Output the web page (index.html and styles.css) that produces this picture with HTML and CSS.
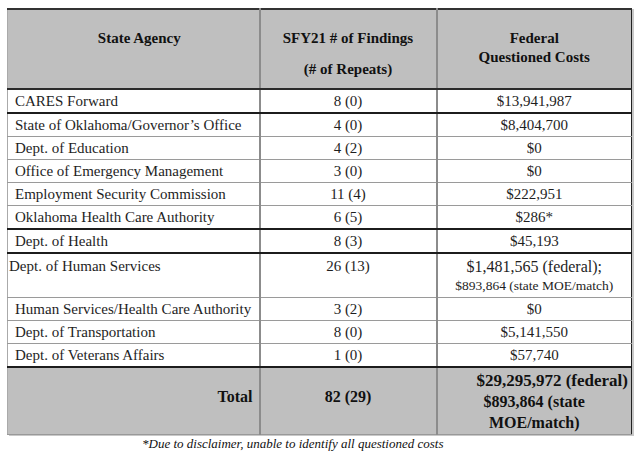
FILE: index.html
```html
<!DOCTYPE html>
<html lang="en">
<head>
<meta charset="utf-8">
<title>SFY21 Findings</title>
<link rel="stylesheet" href="styles.css">
</head>
<body>
<div class="page">
  <table class="grid">
    <colgroup>
      <col class="c1"><col class="c2"><col class="c3">
    </colgroup>
    <thead>
      <tr class="head">
        <th class="h1">State Agency</th>
        <th class="h2"><p>SFY21 # of Findings</p><p class="gap">(# of Repeats)</p></th>
        <th class="h3">Federal<br>Questioned Costs</th>
      </tr>
    </thead>
    <tbody>
      <tr class="dark"><td class="name">CARES Forward</td><td>8 (0)</td><td>$13,941,987</td></tr>
      <tr><td class="name">State of Oklahoma/Governor’s Office</td><td>4 (0)</td><td>$8,404,700</td></tr>
      <tr><td class="name">Dept. of Education</td><td>4 (2)</td><td>$0</td></tr>
      <tr><td class="name">Office of Emergency Management</td><td>3 (0)</td><td>$0</td></tr>
      <tr><td class="name">Employment Security Commission</td><td>11 (4)</td><td>$222,951</td></tr>
      <tr class="dark"><td class="name">Oklahoma Health Care Authority</td><td>6 (5)</td><td>$286*</td></tr>
      <tr class="dark"><td class="name">Dept. of Health</td><td>8 (3)</td><td>$45,193</td></tr>
      <tr class="tall"><td class="name tight">Dept. of Human Services</td><td>26 (13)</td><td><div class="big">$1,481,565 (federal);</div><div class="small">$893,864 (state MOE/match)</div></td></tr>
      <tr><td class="name">Human Services/Health Care Authority</td><td>3 (2)</td><td>$0</td></tr>
      <tr><td class="name">Dept. of Transportation</td><td>8 (0)</td><td>$5,141,550</td></tr>
      <tr class="dark"><td class="name">Dept. of Veterans Affairs</td><td>1 (0)</td><td>$57,740</td></tr>
    </tbody>
    <tfoot>
      <tr class="total">
        <td class="tlabel">Total</td>
        <td class="tcount">82 (29)</td>
        <td class="tcost"><div class="l1">$29,295,972 (federal)</div><div class="l2">$893,864 (state</div><div class="l3">MOE/match)</div></td>
      </tr>
    </tfoot>
  </table>
  <p class="note">*Due to disclaimer, unable to identify all questioned costs</p>
</div>
</body>
</html>
```
FILE: styles.css
```css
html, body {
  margin: 0;
  padding: 0;
  background: #ffffff;
}
body {
  font-family: "Liberation Serif", "Times New Roman", serif;
  color: #1e1e1e;
  width: 640px;
  height: 457px;
  overflow: hidden;
}
.page {
  padding: 8px 0 0 7px;
}
.grid {
  border-collapse: collapse;
  width: 624px;
  table-layout: fixed;
  border-top: 2px solid #333;
  border-left: 1px solid #aaa;
  border-right: 1px solid #222;
  border-bottom: 1px solid #999;
  box-shadow: 2px 1px 0 #c8c8c8;
  font-size: 15px;
  line-height: 17px;
}
.c1 { width: 252px; }
.c2 { width: 177px; }
.c3 { width: 195px; }

th, td {
  padding: 3px 4px 2px;
  text-align: center;
  vertical-align: middle;
  border-bottom: 1px solid #9a9a9a;
}
th + th, td + td {
  border-left: 2px solid #8c8c8c;
}
.head th {
  background: #bfbfbf;
  font-weight: bold;
  color: #111;
  vertical-align: top;
  line-height: 19px;
  padding: 19px 4px 9px;
  border-bottom: 2px solid #2a2a2a;
}
.h1 { padding-left: 16px !important; }
.head p { margin: 0; }
.head .gap { margin-top: 12px; }

td.name {
  text-align: left;
  padding-left: 7px;
}
td.tight { padding-left: 1px; }

tr.dark td {
  border-bottom: 2px solid #1c1c1c;
}

tr.tall td {
  vertical-align: top;
  padding-top: 4px;
  padding-bottom: 2px;
}
.big { font-size: 16px; line-height: 18px; }
.small { font-size: 13.5px; line-height: 19px; }

.total td {
  background: #bfbfbf;
  font-weight: bold;
  color: #111;
  border-bottom: 1px solid #999;
  padding-top: 2px;
  padding-bottom: 1px;
}
.tlabel {
  text-align: right !important;
  padding-right: 6px !important;
  font-size: 16px;
  padding-bottom: 12px !important;
}
.tcount {
  font-size: 16px;
  padding-bottom: 12px !important;
}
.tcost {
  font-size: 16px;
  line-height: 21px;
}
.tcost .l1 { text-align: right; margin-right: -1px; font-size: 17px; }
.tcost .l2, .tcost .l3 { text-align: center; }

.note {
  margin: 1px 0 0 135px;
  font-style: italic;
  font-size: 13px;
  line-height: 16px;
  color: #111;
}
```
